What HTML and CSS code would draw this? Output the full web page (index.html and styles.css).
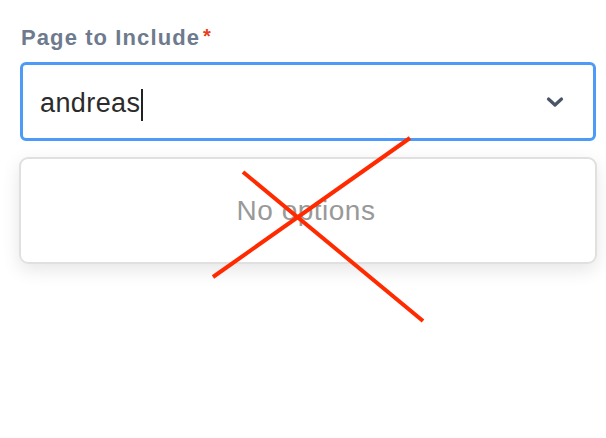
FILE: index.html
```html
<!DOCTYPE html>
<html lang="en">
<head>
    <meta charset="UTF-8">
    <meta name="viewport" content="width=device-width, initial-scale=1.0">
    <title>Page to Include</title>
    <link rel="stylesheet" href="styles.css">
</head>
<body>
    <div class="field">
        <!-- Field label with required marker -->
        <label class="field-label">Page to Include<span class="required">*</span></label>

        <div class="select-box">
            <span class="select-value">andreas</span><span class="caret"></span>
            <svg class="chevron" width="18" height="12" viewBox="0 0 18 12">
                <path d="M2.5 3 L9 9 L15.5 3" fill="none" stroke="#4a5568" stroke-width="3.2" stroke-linecap="round" stroke-linejoin="round"/>
            </svg>
        </div>

        <div class="menu">
            <p class="menu-empty">No options</p>
        </div>
    </div>

    <!-- Red cross drawn over the screenshot -->
    <svg class="cross" width="606" height="438" viewBox="0 0 606 438">
        <line x1="213" y1="277" x2="410" y2="138" stroke="#ff2a00" stroke-width="4"/>
        <line x1="243" y1="172" x2="423" y2="321" stroke="#ff2a00" stroke-width="4"/>
    </svg>
</body>
</html>
```

FILE: styles.css
```css
/* General Reset */
body, html {
    margin: 0;
    padding: 0;
    min-height: 100%;
    background: #ffffff;
    font-family: "Liberation Sans", Arial, sans-serif;
}

/* Field wrapper */
.field {
    padding: 24px 10px 120px 20px;
}

/* Label */
.field-label {
    display: block;
    font-size: 22px;
    font-weight: bold;
    letter-spacing: 1.1px;
    color: #6e7a8d;
    line-height: 28px;
    padding-left: 1px;
}

.required {
    color: #e8401c;
    font-size: 20px;
    line-height: 0;
    margin-left: 3px;
    vertical-align: 2px;
}

/* Select input */
.select-box {
    margin-top: 10px;
    width: 576px;
    height: 79px;
    box-sizing: border-box;
    border: 3px solid #4d9bf7;
    border-radius: 6px;
    display: flex;
    align-items: center;
    padding-left: 17px;
    padding-right: 29px;
    padding-top: 4px;
}

.select-value {
    font-size: 27px;
    letter-spacing: 0.4px;
    color: #2b2b2b;
}

.caret {
    width: 2px;
    height: 32px;
    background: #222222;
    margin-left: 1px;
    margin-top: 2px;
}

.chevron {
    margin-left: auto;
    margin-top: -3px;
}

/* Dropdown menu */
.menu {
    margin-top: 16px;
    margin-left: -1px;
    width: 578px;
    height: 107px;
    box-sizing: border-box;
    border: 2px solid #e0e0e0;
    border-radius: 9px;
    box-shadow: 0px 6px 18px rgba(0, 0, 0, 0.1);
    display: flex;
    justify-content: center;
    align-items: center;
}

.menu-empty {
    margin: 0 0 0 -4px;
    font-size: 28px;
    letter-spacing: 0.5px;
    color: #999999;
}

/* Overlay mark */
.cross {
    position: absolute;
    left: 0;
    top: 0;
}
```
